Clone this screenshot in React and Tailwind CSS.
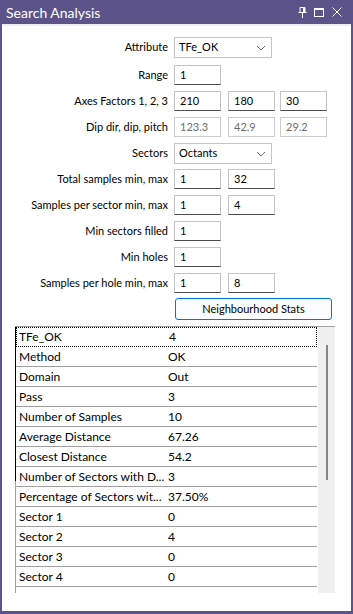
import React from 'react'

const font = { fontFamily: 'Lato, "Noto Sans", sans-serif' }

const rows = [
  ['TFe_OK', '4'],
  ['Method', 'OK'],
  ['Domain', 'Out'],
  ['Pass', '3'],
  ['Number of Samples', '10'],
  ['Average Distance', '67.26'],
  ['Closest Distance', '54.2'],
  ['Number of Sectors with D...', '3'],
  ['Percentage of Sectors wit...', '37.50%'],
  ['Sector 1', '0'],
  ['Sector 2', '4'],
  ['Sector 3', '0'],
  ['Sector 4', '0'],
  ['Sector 5', '0'],
]

const Chevron = () => (
  <svg width="10" height="6" viewBox="0 0 10 6" className="mr-[5px]">
    <path d="M1 1l4 4 4-4" fill="none" stroke="#6a6a6a" strokeWidth="1" />
  </svg>
)

const Box = ({ value, disabled, className = '' }) => (
  <div
    className={`h-[20px] w-[47px] bg-white flex items-center pl-[5px] border ${
      disabled
        ? 'border-[#cccccc] text-[#6d6d6d]'
        : 'border-[#c4c4c4] border-b-[#4d4d4d] text-black'
    } ${className}`}
  >
    {value}
  </div>
)

const Combo = ({ value }) => (
  <div className="h-[21px] w-[98px] bg-white border border-[#c4c4c4] flex items-center justify-between pl-[4px]">
    <span>{value}</span>
    <Chevron />
  </div>
)

const Row = ({ label, children, className = 'mt-[6px]' }) => (
  <div className={`flex items-center ${className}`}>
    <div className="w-[166px] text-right text-black whitespace-nowrap">{label}</div>
    <div className="ml-[6px] flex items-center">{children}</div>
  </div>
)

export default function App() {
  return (
    <div className="w-[353px] h-[614px] bg-[#5c5488] flex flex-col px-[2px] pb-[3px]" style={font}>
      {/* title bar */}
      <div className="h-[24px] flex items-center justify-between pl-[4px] pr-[9px] text-white">
        <span className="text-[14px]">Search Analysis</span>
        <div className="flex items-center gap-[7px]">
          <svg width="9" height="11" viewBox="0 0 9 11">
            <path d="M2 .5h5v5H2z M.5 5.5h8 M4.5 5.5V11" fill="none" stroke="#fff" strokeWidth="1" />
            <path d="M5 1h2v4.5H5z" fill="#fff" />
          </svg>
          <svg width="10" height="9" viewBox="0 0 10 9">
            <rect x=".5" y=".5" width="9" height="8" fill="none" stroke="#fff" />
            <rect x="0" y="0" width="10" height="2" fill="#fff" />
          </svg>
          <svg width="10" height="10" viewBox="0 0 10 10" className="ml-[1px]">
            <path d="M.5.5l9 9M9.5.5l-9 9" stroke="#fff" strokeWidth="1" />
          </svg>
        </div>
      </div>

      {/* body */}
      <div className="flex-1 bg-white border-t-2 border-[#eeeeee] flex flex-col text-[11px] text-black">
        <div className="pt-[11px]">
          <Row label="Attribute" className="">
            <Combo value="TFe_OK" />
          </Row>
          <Row label="Range" className="mt-[7px]">
            <Box value="1" />
          </Row>
          <Row label="Axes Factors 1, 2, 3">
            <Box value="210" />
            <Box value="180" className="ml-[7px]" />
            <Box value="30" className="ml-[5px]" />
          </Row>
          <Row label="Dip dir, dip, pitch">
            <Box value="123.3" disabled />
            <Box value="42.9" disabled className="ml-[7px]" />
            <Box value="29.2" disabled className="ml-[5px]" />
          </Row>
          <Row label="Sectors">
            <Combo value="Octants" />
          </Row>
          <Row label="Total samples min, max" className="mt-[5px]">
            <Box value="1" />
            <Box value="32" className="ml-[7px]" />
          </Row>
          <Row label="Samples per sector min, max">
            <Box value="1" />
            <Box value="4" className="ml-[7px]" />
          </Row>
          <Row label="Min sectors filled">
            <Box value="1" />
          </Row>
          <Row label="Min holes">
            <Box value="1" />
          </Row>
          <Row label="Samples per hole min, max">
            <Box value="1" />
            <Box value="8" className="ml-[7px]" />
          </Row>
          <div className="flex mt-[5px] pl-[173px]">
            <button className="h-[22px] w-[157px] rounded-[3px] border border-[#0078d7] bg-[#fbfdff] text-black text-[11px] flex items-center justify-center">
              Neighbourhood Stats
            </button>
          </div>
        </div>

        {/* stats list */}
        <div className="mt-[6px] ml-[13px] w-[320px] h-[267px] border-t border-[#a0a0a0] flex relative overflow-hidden text-[12px]">
          <div className="absolute left-0 top-0 w-px h-[154px] bg-black" />
          <div className="w-[302px] border-l border-[#a0a0a0] flex flex-col">
            {rows.map(([k, v], i) => (
              <div
                key={k}
                className={`h-[20px] shrink-0 flex items-center border-b ${
                  i === 0 ? 'border border-dotted border-black' : 'border-[#a0a0a0]'
                }`}
              >
                <span className={`w-[152px] whitespace-nowrap ${i === 0 ? 'pl-[2px]' : 'pl-[3px]'}`}>{k}</span>
                <span>{v}</span>
              </div>
            ))}
          </div>
          <div className="w-[17px] bg-[#f0f0f0] ml-px flex justify-center pt-[18px]">
            <div className="w-[2px] h-[135px] bg-[#858585]" />
          </div>
        </div>
      </div>
    </div>
  )
}
